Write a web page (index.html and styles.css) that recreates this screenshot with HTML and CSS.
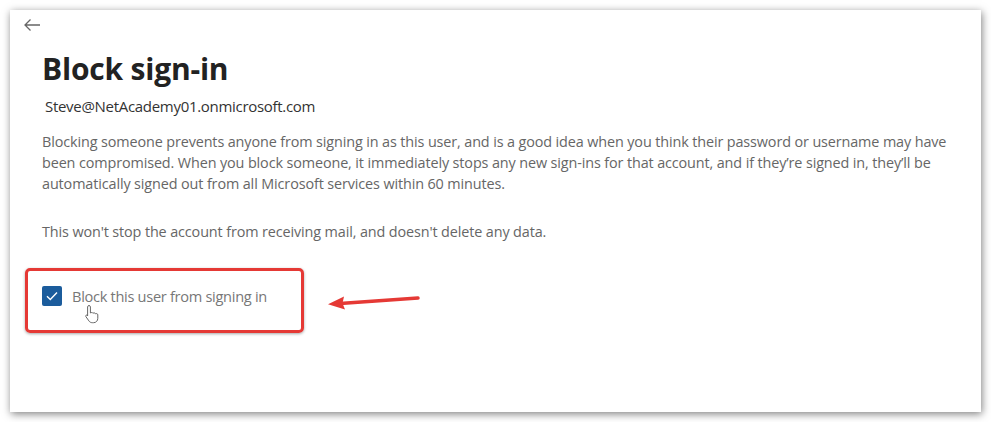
FILE: index.html
```html
<!DOCTYPE html>
<html>

<head>
    <title>Block sign-in</title>
    <link rel="stylesheet" href="styles.css">
</head>

<body>
    <div class="panel">
        <button class="back" aria-label="Back">
            <svg width="18" height="14" viewBox="0 0 18 14">
                <path d="M17 7H2M7.5 1.5L2 7l5.5 5.5" fill="none" stroke="#666" stroke-width="1.3" />
            </svg>
        </button>

        <h1>Block sign-in</h1>
        <p class="user">Steve@NetAcademy01.onmicrosoft.com</p>

        <p class="info">Blocking someone prevents anyone from signing in as this user, and is a good idea when you think their password or username may have been compromised. When you block someone, it immediately stops any new sign-ins for that account, and if they’re signed in, they’ll be automatically signed out from all Microsoft services within 60 minutes.</p>
        <p class="info">This won't stop the account from receiving mail, and doesn't delete any data.</p>

        <div class="callout">
            <div class="highlight">
                <input type="checkbox" id="block-user" checked>
                <label for="block-user" class="check">
                    <span class="box">
                        <svg width="12" height="10" viewBox="0 0 12 10">
                            <path d="M1 5.2l3.3 3.2L11 1.5" fill="none" stroke="#fff" stroke-width="1.4" />
                        </svg>
                    </span>
                    <span class="check_txt">Block this user from signing in</span>
                </label>
                <svg class="cursor" width="16" height="20" viewBox="0 0 16 20">
                    <path d="M5 1.5c.8 0 1.4.6 1.4 1.4V9c.3-.6 2.4-.7 2.6.3.4-.7 2.3-.6 2.5.5.5-.5 2.3-.3 2.3 1v3.5c0 2.5-1.8 4.4-4.2 4.4H8.3c-1.5 0-2.6-.7-3.4-1.8L1.8 12.5c-.6-.9.6-1.9 1.5-1.2L3.6 12V2.9c0-.8.6-1.4 1.4-1.4z" fill="#fff" stroke="#666" stroke-width="1" />
                </svg>
            </div>
            <svg class="pointer" width="96" height="20" viewBox="0 0 96 20">
                <path d="M92 6L14 11.5" stroke="#e53935" stroke-width="3.5" stroke-linecap="round" />
                <path d="M2 12.3L18 4.5 16.5 11.2 19 17.5z" fill="#e53935" />
            </svg>
        </div>
    </div>
</body>

</html>
```

FILE: styles.css
```css
* {
    margin: 0;
    padding: 0;
    box-sizing: border-box;
}

body {
    background: #fff;
    padding: 10px;
    font-family: "Open Sans", "Liberation Sans", sans-serif;
}

.panel {
    width: 971px;
    height: 402px;
    background: #fff;
    box-shadow: 1px 2px 8px rgba(0, 0, 0, 0.5);
    padding: 5px 32px 0 32px;
}

.back {
    border: none;
    background: none;
    display: block;
    width: 20px;
    height: 20px;
    margin-left: -20px;
    padding-top: 3px;
}

h1 {
    font-size: 30px;
    font-weight: 700;
    color: #222;
    margin-top: 17px;
    line-height: 34px;
    letter-spacing: -0.2px;
}

.user {
    font-size: 15px;
    color: #333;
    margin: 10px 0 0 3px;
    line-height: 20px;
    letter-spacing: -0.3px;
}

.info {
    font-size: 14.4px;
    color: #666;
    line-height: 21px;
    letter-spacing: -0.12px;
    width: 925px;
    margin-top: 15px;
}

.info + .info {
    margin-top: 27px;
}

.callout {
    display: flex;
    align-items: center;
    gap: 22px;
    margin: 26px 0 0 -17px;
}

.highlight {
    position: relative;
    width: 279px;
    height: 65px;
    border: 3px solid #e53935;
    border-radius: 5px;
    box-shadow: 0 1px 3px rgba(0, 0, 0, 0.35);
    padding: 15px 0 0 14px;
}

#block-user {
    display: none;
}

.check {
    display: flex;
    align-items: center;
    gap: 10px;
}

.box {
    width: 20px;
    height: 20px;
    border-radius: 2px;
    background: #1b5c9c;
    display: flex;
    align-items: center;
    justify-content: center;
}

#block-user:not(:checked)+.check .box {
    background: #fff;
    border: 1px solid #666;
}

.check_txt {
    font-size: 14.6px;
    color: #777;
    letter-spacing: -0.3px;
}

.cursor {
    position: absolute;
    left: 56px;
    top: 33px;
}

.pointer {
    margin-top: 3px;
}
```
